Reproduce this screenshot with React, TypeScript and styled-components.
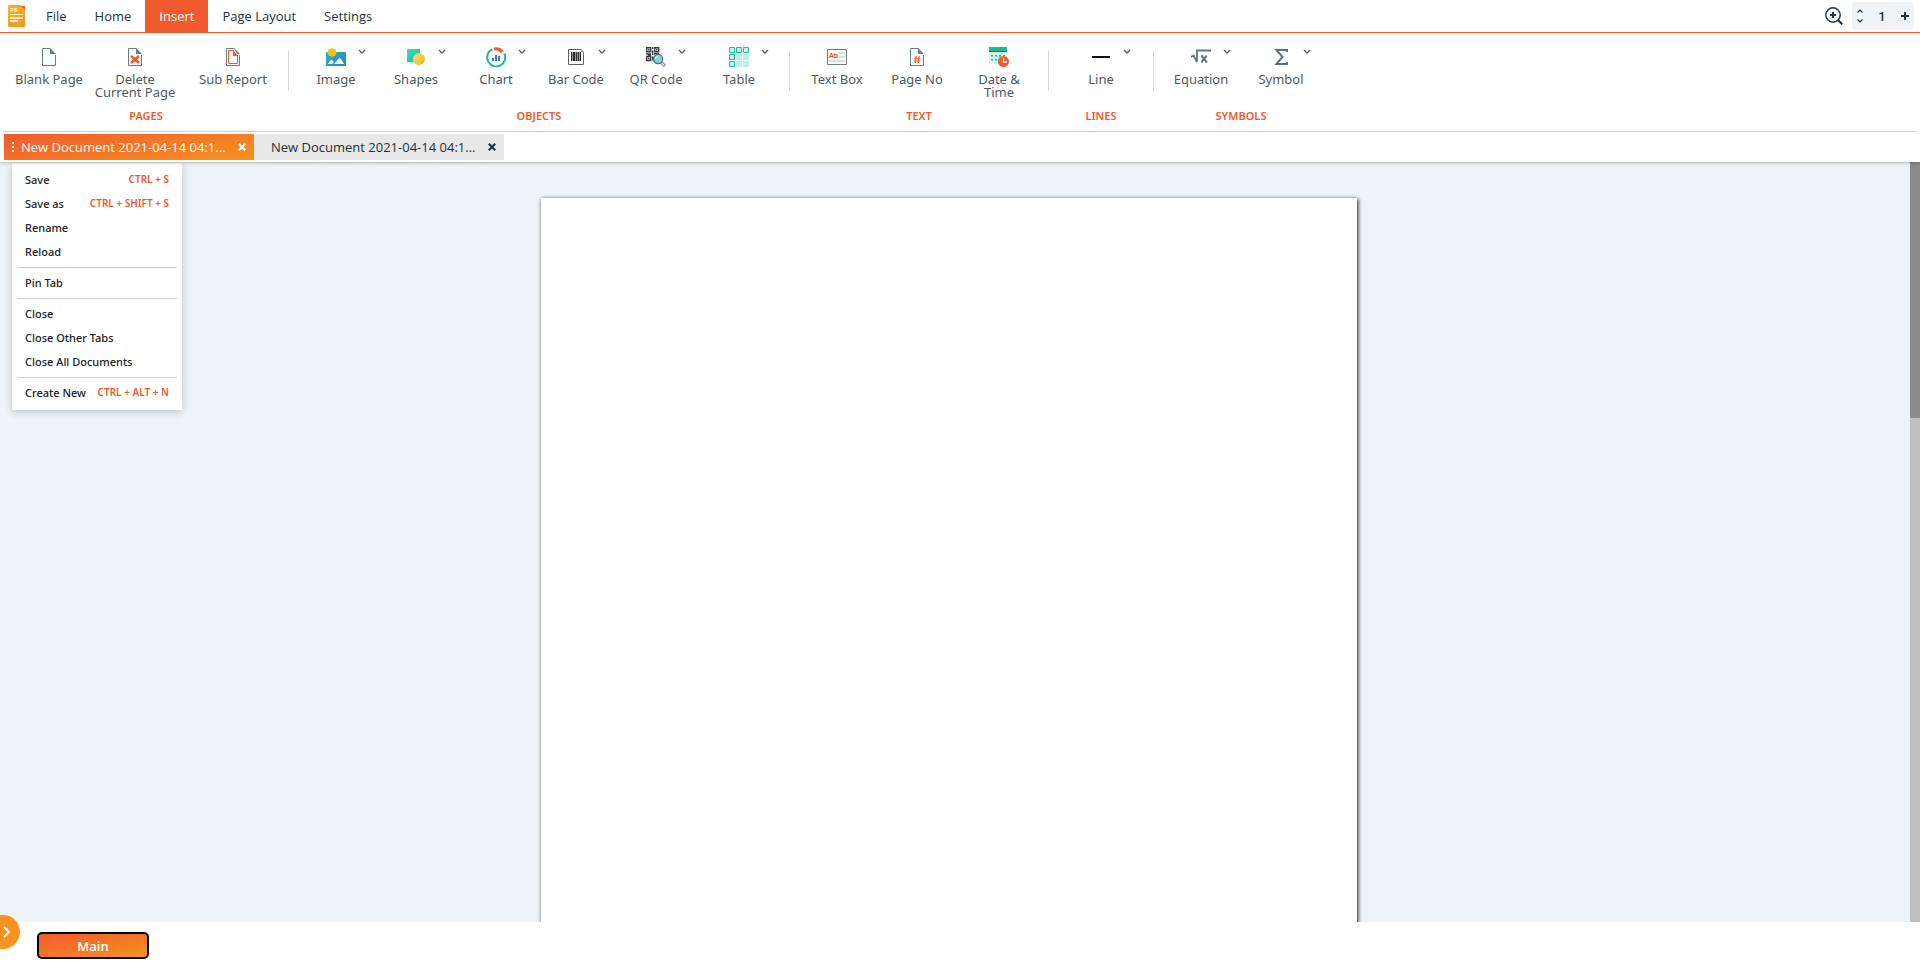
import React from "react";
import styled, { createGlobalStyle, css } from "styled-components";

const color = {
  accent: "#f15a2e",
  amber: "#f7931e",
  ink: "#22313a",
  label: "#4f5b60",
  canvas: "#edf3f6",
  rule: "#d9d9d9",
};
const accentGradient = "linear-gradient(170deg, #f15a2e 0%, #f7931e 100%)";

const GlobalStyle = createGlobalStyle`
  * { box-sizing: border-box; }
  body {
    margin: 0;
    background: #fff;
    color: ${color.ink};
    font-family: "Open Sans", "Noto Sans", sans-serif;
    font-size: 13px;
  }
  button, input { font: inherit; color: inherit; border: 0; padding: 0; background: none; }
  svg { display: block; }
`;

const Shell = styled.div`
  display: flex;
  flex-direction: column;
  height: 100vh;
  overflow: hidden;
`;

/* ---------- top menu ---------- */

const TopBar = styled.header`
  display: flex;
  align-items: center;
  height: 33px;
  padding: 0 6px 0 8px;
  border-bottom: 1px solid ${color.accent};
`;

const TopNav = styled.nav`
  display: flex;
  flex: 1;
  align-self: stretch;
  margin-left: 7px;
`;

const NavButton = styled.button<{ $active?: boolean }>`
  padding: 0 14px;
  line-height: 32px;
  ${(p) =>
    p.$active &&
    css`
      background: ${color.accent};
      color: #fff;
    `}
`;

const ZoomButton = styled.button`
  margin-right: 9px;
`;

const PageStepper = styled.div`
  display: flex;
  align-items: center;
  justify-content: space-between;
  width: 62px;
  height: 28px;
  padding: 0 5px;
  border-radius: 4px;
  background: ${color.canvas};
`;

const StepArrows = styled.div`
  display: grid;
  gap: 6px;
`;

const PageInput = styled.input`
  width: 24px;
  text-align: center;
  font-family: Roboto, sans-serif;
  font-weight: 500;
`;

/* ---------- ribbon ---------- */

const Ribbon = styled.section`
  display: flex;
  height: 99px;
  margin: 0 4px;
  border-bottom: 1px solid ${color.rule};
`;

const Group = styled.div`
  display: flex;
  flex-direction: column;
  justify-content: space-between;
  padding: 14px 0 8px;
`;

const Tools = styled.div<{ $flush?: boolean }>`
  display: flex;
  padding: ${(p) => (p.$flush ? "0 3px 0 5px" : "0 7px")};
`;

const GroupTitle = styled.h2`
  margin: 0;
  text-align: center;
  font-family: "Noto Sans", sans-serif;
  font-size: 11px;
  line-height: 14px;
  font-weight: 600;
  color: ${color.accent};
`;

const Divider = styled.div`
  width: 1px;
  height: 40px;
  margin-top: 18px;
  background: ${color.rule};
`;

const ToolButton = styled.button<{ $width: number }>`
  display: flex;
  flex-direction: column;
  align-items: center;
  width: ${(p) => p.$width}px;
  color: ${color.label};
  font-family: "Noto Sans", sans-serif;
  font-size: 13px;
  line-height: 13px;
`;

const IconRow = styled.span`
  display: grid;
  grid-template-columns: 20px 20px 20px;
  justify-content: center;
  height: 20px;
  margin-bottom: 6px;
  column-gap: 6px;

  & > :first-child { grid-column: 2; }
  & > :nth-child(2) { justify-self: center; }
`;

const ToolLabel = styled.span`
  white-space: pre-line;
`;

/* ---------- document tabs ---------- */

const TabBar = styled.div`
  position: relative;
  z-index: 2;
  display: flex;
  height: 30px;
  padding: 2px 4px;
  background: #fff;
  box-shadow: 0 1px 3px rgba(0, 0, 0, 0.25);
`;

const DocTab = styled.div<{ $active?: boolean }>`
  display: flex;
  align-items: center;
  width: 250px;
  padding: 0 8px 0 7px;
  background: ${(p) => (p.$active ? accentGradient : "#e8e8e8")};
  color: ${(p) => (p.$active ? "#fff" : color.ink)};
`;

const TabHandle = styled.button`
  flex: none;
  width: 10px;
  height: 16px;
`;

const TabTitle = styled.button<{ $active?: boolean }>`
  flex: 1;
  padding-left: ${(p) => (p.$active ? "0" : "10px")};
  text-align: left;
  white-space: nowrap;
  line-height: 26px;
`;

const CloseButton = styled.button`
  flex: none;
`;

/* ---------- workspace ---------- */

const Workspace = styled.main`
  position: relative;
  display: flex;
  flex: 1;
  min-height: 0;
  background: ${color.canvas};
`;

const Canvas = styled.div`
  display: flex;
  flex: 1;
  justify-content: center;
  padding: 36px 12px 0 0;
  overflow: hidden;
`;

const Sheet = styled.article`
  width: 816px;
  height: 1056px;
  background: #fff;
  box-shadow: 1px 1px 4px #111;
`;

const ScrollTrack = styled.div`
  width: 10px;
  background: #bfbfbf;
`;

const ScrollThumb = styled.div`
  height: 256px;
  background: #8a8a8a;
`;

const ContextMenu = styled.div`
  position: absolute;
  z-index: 1;
  top: 1px;
  left: 12px;
  width: 170px;
  padding: 5px;
  background: #fff;
  box-shadow: 0 2px 8px rgba(0, 0, 0, 0.2);
`;

const MenuItem = styled.button`
  display: flex;
  align-items: center;
  justify-content: space-between;
  width: 100%;
  height: 24px;
  padding: 0 8px 2px;
  color: #222;
  font-family: "Noto Sans", sans-serif;
  font-size: 11px;
  font-weight: 500;
  white-space: nowrap;
`;

const Shortcut = styled.span`
  color: ${color.accent};
  font-size: 10px;
  font-weight: 600;
`;

const MenuRule = styled.hr`
  height: 1px;
  margin: 3px 0;
  border: 0;
  background: #ccc;
`;

/* ---------- bottom bar ---------- */

const BottomBar = styled.footer`
  position: relative;
  display: flex;
  align-items: center;
  height: 47px;
  padding: 0 37px;
  background: #fff;
`;

const DrawerToggle = styled.button`
  position: absolute;
  top: -7px;
  left: -14px;
  width: 34px;
  height: 34px;
  padding-left: 15px;
  border-radius: 50%;
  background: ${color.amber};
`;

const SheetTab = styled.button`
  width: 112px;
  height: 27px;
  border: 2px solid #000;
  border-radius: 5px;
  background: ${accentGradient};
  color: #fff;
  font-size: 13px;
  font-weight: 600;
`;

/* ---------- drawings ---------- */

const Icon = ({ children }: { children: React.ReactNode }) => (
  <svg width="20" height="20" viewBox="0 0 20 20" fill="none" aria-hidden="true">
    {children}
  </svg>
);

const Paper = () => (
  <>
    <path d="M11.5 1.5h-8v17h13V8" stroke="#6d7d82" />
    <path d="M11 1l6 6h-6z" fill="#6d7d82" />
  </>
);

const BlankIcon = () => <Icon><Paper /></Icon>;

const DeleteIcon = () => (
  <Icon><Paper /><path d="M6 9l8 7M14 9l-8 7" stroke={color.accent} strokeWidth="2.6" /></Icon>
);

const ReportIcon = () => (
  <Icon>
    <path d="M11.5 1.5h-8v17h13V8" stroke="#6d7d82" />
    <path d="M10.500 3.500h-5v13h9V8" stroke={color.accent} />
    <path d="M10 3l5 6h-5z" fill={color.accent} />
    <path d="M11 1l6 6h-3z" fill="#6d7d82" />
  </Icon>
);

const ImageIcon = () => (
  <Icon>
    <defs>
      <linearGradient id="sky" x1="0" y1="0" x2="1" y2="1">
        <stop stopColor="#30b2c8" /><stop offset="1" stopColor="#2389bb" />
      </linearGradient>
    </defs>
    <path d="M0 5h20v14H0z" fill="url(#sky)" />
    <path d="M2 17c1-2 2-4 4-4l2 2-2 2zM8 17l5-6c2 0 3 3 5 6z" fill="#fff" />
    <path d="M6 1l1.500 1 2 .2.400 1.800 1 1.500-1 1.500-.4 1.800-2 .2L6 10l-1.500-1-2-.2L2.100 7 1 5.500 2.100 4l.4-1.800 2-.2z" fill="#ecc019" />
  </Icon>
);

const ShapesIcon = () => (
  <Icon>
    <defs>
      <linearGradient id="mint" x1="0" y1="0" x2="1" y2="1">
        <stop stopColor="#3fdcc0" /><stop offset="1" stopColor="#1fb79a" />
      </linearGradient>
      <linearGradient id="sun" x1="0" y1="0" x2="1" y2="1">
        <stop stopColor="#f8df7d" /><stop offset="1" stopColor="#e9b90e" />
      </linearGradient>
    </defs>
    <path d="M1 2h13v13H1z" fill="url(#mint)" />
    <circle cx="13" cy="12" r="6" fill="url(#sun)" />
  </Icon>
);

const ChartIcon = () => (
  <Icon>
    <path d="M6.500 2.200A9 9 0 1 0 18.300 6.500" stroke="#1fb99b" strokeWidth="2" />
    <path d="M8 .5c4-.9 7.500.7 9.500 3.700L14.500 6C13 4 11 3.200 8.500 3.800z" fill={color.accent} />
    <path d="M6 11h2v3H6zM9 8h2v6H9zM12 9h2v5h-2z" fill="#2a80b9" />
  </Icon>
);

const BarcodeIcon = () => (
  <Icon>
    <path d="M2.500 2.500h12l3 3v12h-15z" stroke="#5b6367" />
    <path d="M15 2l3 3h-3z" fill="#888" />
    <path d="M5 5h1v9H5zM7 5h2v9H7zM10 5h1v9h-1zM12 5h1v9h-1zM14 5h1v9h-1z" fill="#222" />
    <path d="M5 5h10v9H5z" fill="#333" opacity=".5" />
  </Icon>
);

const QrIcon = () => (
  <Icon>
    <g stroke="#3a3a3e" strokeWidth="1.400">
      <path d="M.7.700h4v4h-4zM8.700.700h4v4h-4zM.7 9.500h4v4h-4z" />
      <path d="M6.700 0v2M6.700 3.500V8M0 7h5M8 6.700h5M6.700 9.500v4M2 8.200h3" />
    </g>
    <path d="M2 2h1.500v1.500H2zM10 2h1.500v1.500H10zM2 10.800h1.500v1.500H2z" fill="#3a3a3e" />
    <circle cx="12" cy="12" r="5.200" fill="#fff" />
    <circle cx="12" cy="12" r="4.600" fill="#7fd6dc" stroke="#59666c" strokeWidth="1.200" />
    <path d="M9.500 12c0-1.800 1-2.500 2.500-2.500" stroke="#d5f7f7" />
    <path d="M15.300 15.300l3.700 3.700" stroke="#6f777b" strokeWidth="2.800" />
    <path d="M15.800 15.800l2.700 2.700" stroke="#f2f2f2" strokeWidth="1.200" />
  </Icon>
);

const TableIcon = () => (
  <Icon>
    <path d="M7 7h6v6H7zM14 7h6v6h-6zM7 14h6v6H7zM14 14h6v6h-6z" fill="#b8f1e4" />
    <path
      d="M.5.5h5v5h-5zM7.500.5h5v5h-5zM14.500.5h5v5h-5zM.5 7.500h5v5h-5zM.5 14.500h5v5h-5z"
      fill="#c8f5ea"
      stroke="#1fb99b"
    />
  </Icon>
);

const GlyphText = styled.text`
  font-family: "Open Sans", sans-serif;
  font-weight: 700;
`;

const TextBoxIcon = () => (
  <Icon>
    <path d="M.5 2.500h19v15H.5z" stroke="#6d7d82" />
    <path d="M12 5h6v2h-6zM12 9h6v2h-6zM2 13h16v2H2z" fill="#d9dcde" />
    <GlyphText x="2" y="11" fontSize="7" fill={color.accent}>Ab</GlyphText>
  </Icon>
);

const PageNoIcon = () => (
  <Icon>
    <Paper />
    <path
      d="M9 9l-.6 7M12 9l-.6 7M7 11.200h6.500M6.700 14h6.500"
      stroke={color.accent}
      strokeWidth="1.100"
    />
  </Icon>
);

const DateIcon = () => (
  <Icon>
    <path d="M0 0h18v17H0z" fill="#d2f5ec" />
    <path d="M0 0h18v4H0z" fill="#1fb99b" />
    <path d="M0 4h18v1H0z" fill="#455a60" />
    <path d="M2 8.750h14M2 12.750h9" stroke="#1fb99b" strokeWidth="1.500" strokeDasharray="2 2" />
    <circle cx="14.500" cy="14.500" r="5.500" fill={color.accent} />
    <path d="M14.500 11v4H18" stroke="#fff" strokeWidth="1.300" />
  </Icon>
);

const LineIcon = () => <Icon><path d="M1 9h18v2H1z" fill="#111" /></Icon>;

const EquationIcon = () => (
  <Icon>
    <path d="M0 10l2.500-1.500L6 15V3.500h14" stroke="#66767c" strokeWidth="1.800" />
    <path d="M10.500 9l5 6M15.500 9l-5 6" stroke="#56656b" strokeWidth="1.900" />
    <path d="M10 9h2.500M14.500 9H16M10 15h2M14 15h2.500" stroke="#56656b" />
  </Icon>
);

const SymbolIcon = () => (
  <Icon>
    <path d="M16 5V3H5.500l6 7-6 7H16v-2" stroke="#60707a" strokeWidth="2" />
  </Icon>
);

const Chevron = () => (
  <svg width="8" height="10" viewBox="0 0 8 10" fill="none" aria-hidden="true">
    <path d="M1 3l3 3 3-3" stroke={color.label} strokeWidth="1.300" />
  </svg>
);

const Cross = () => (
  <svg width="8" height="8" viewBox="0 0 8 8" aria-hidden="true">
    <path d="M.8.8l6.400 6.400M7.200.8L.8 7.200" stroke="currentColor" strokeWidth="2.200" />
  </svg>
);

const Logo = () => (
  <svg width="17" height="22" viewBox="0 0 17 22" role="img" aria-label="PB">
    <defs>
      <linearGradient id="logo" x1="0" y1="0" x2="1" y2="1">
        <stop stopColor="#f0b428" /><stop offset="1" stopColor="#f7931e" />
      </linearGradient>
    </defs>
    <path d="M1 0h12l4 4v17l-1 1H1l-1-1V1z" fill="url(#logo)" />
    <path d="M13 1h4v4z" fill={color.accent} />
    <path d="M2 9h13v1H2zM2 12h13v2H2zM2 15h8v2H2z" fill="#fff0c4" />
    <GlyphText x="2" y="7" fontSize="6" fill="#fff0c4">PB</GlyphText>
  </svg>
);

/* ---------- data ---------- */

type Tool = { label: string; icon: React.FC; width?: number; menu?: boolean };

const groups: { title: string; flush?: boolean; tools: Tool[] }[] = [
  {
    title: "PAGES",
    flush: true,
    tools: [
      { label: "Blank Page", icon: BlankIcon },
      { label: "Delete\nCurrent Page", icon: DeleteIcon, width: 92 },
      { label: "Sub Report", icon: ReportIcon, width: 104 },
    ],
  },
  {
    title: "OBJECTS",
    tools: [
      { label: "Image", icon: ImageIcon, menu: true },
      { label: "Shapes", icon: ShapesIcon, menu: true },
      { label: "Chart", icon: ChartIcon, menu: true },
      { label: "Bar Code", icon: BarcodeIcon, menu: true },
      { label: "QR Code", icon: QrIcon, menu: true },
      { label: "Table", icon: TableIcon, menu: true, width: 86 },
    ],
  },
  {
    title: "TEXT",
    tools: [
      { label: "Text Box", icon: TextBoxIcon },
      { label: "Page No", icon: PageNoIcon },
      { label: "Date &\nTime", icon: DateIcon, width: 84 },
    ],
  },
  { title: "LINES", tools: [{ label: "Line", icon: LineIcon, menu: true, width: 90 }] },
  {
    title: "SYMBOLS",
    tools: [
      { label: "Equation", icon: EquationIcon, menu: true },
      { label: "Symbol", icon: SymbolIcon, menu: true },
    ],
  },
];

const menuSections: [string, string?][][] = [
  [["Save", "CTRL + S"], ["Save as", "CTRL + SHIFT + S"], ["Rename"], ["Reload"]],
  [["Pin Tab"]],
  [["Close"], ["Close Other Tabs"], ["Close All Documents"]],
  [["Create New", "CTRL + ALT + N"]],
];

export default function App() {
  return (
    <>
      <GlobalStyle />
      <Shell>
        <TopBar>
          <Logo />
          <TopNav>
            {["File", "Home", "Insert", "Page Layout", "Settings"].map((name) => (
              <NavButton key={name} $active={name === "Insert"}>{name}</NavButton>
            ))}
          </TopNav>
          <ZoomButton aria-label="Zoom in">
            <svg width="18" height="18" viewBox="0 0 18 18" fill="none">
              <circle cx="8" cy="8" r="7.200" stroke={color.ink} strokeWidth="1.400" />
              <path d="M8 5v6M5 8h6" stroke={color.ink} strokeWidth="2" />
              <path d="M13 13l4.300 4.300" stroke={color.ink} strokeWidth="2.200" />
            </svg>
          </ZoomButton>
          <PageStepper>
            <StepArrows>
              <button aria-label="Previous page">
                <svg width="6" height="4" viewBox="0 0 6 4" fill="none">
                  <path d="M.5 3.500L3 1l2.500 2.500" stroke={color.ink} strokeWidth="1.200" />
                </svg>
              </button>
              <button aria-label="Next page">
                <svg width="6" height="4" viewBox="0 0 6 4" fill="none">
                  <path d="M.5.5L3 3 5.500.5" stroke={color.ink} strokeWidth="1.200" />
                </svg>
              </button>
            </StepArrows>
            <PageInput aria-label="Page number" defaultValue="1" />
            <button aria-label="Add page">
              <svg width="8" height="8" viewBox="0 0 8 8">
                <path d="M3 0h2v3h3v2H5v3H3V5H0V3h3z" fill={color.ink} />
              </svg>
            </button>
          </PageStepper>
        </TopBar>

        <Ribbon>
          {groups.map((group, index) => (
            <React.Fragment key={group.title}>
              {index > 0 && <Divider />}
              <Group>
                <Tools $flush={group.flush}>
                  {group.tools.map(({ label, icon: ToolIcon, width = 80, menu }) => (
                    <ToolButton key={label} $width={width}>
                      <IconRow>
                        <ToolIcon />
                        {menu && <Chevron />}
                      </IconRow>
                      <ToolLabel>{label}</ToolLabel>
                    </ToolButton>
                  ))}
                </Tools>
                <GroupTitle>{group.title}</GroupTitle>
              </Group>
            </React.Fragment>
          ))}
        </Ribbon>

        <TabBar>
          {[true, false].map((active) => (
            <DocTab key={String(active)} $active={active}>
              {active && (
                <TabHandle aria-label="Tab menu">
                  <svg width="4" height="12" viewBox="0 0 4 12" fill="#fff">
                    <path d="M1 1h2v2H1zM1 5h2v2H1zM1 9h2v2H1z" />
                  </svg>
                </TabHandle>
              )}
              <TabTitle $active={active}>New Document 2021-04-14 04:1...</TabTitle>
              <CloseButton aria-label="Close tab"><Cross /></CloseButton>
            </DocTab>
          ))}
        </TabBar>

        <Workspace>
          <ContextMenu>
            {menuSections.map((items, index) => (
              <React.Fragment key={index}>
                {index > 0 && <MenuRule />}
                {items.map(([name, keys]) => (
                  <MenuItem key={name}>
                    {name}
                    {keys && <Shortcut>{keys}</Shortcut>}
                  </MenuItem>
                ))}
              </React.Fragment>
            ))}
          </ContextMenu>
          <Canvas><Sheet /></Canvas>
          <ScrollTrack><ScrollThumb /></ScrollTrack>
        </Workspace>

        <BottomBar>
          <DrawerToggle aria-label="Open panel">
            <svg width="12" height="14" viewBox="0 0 12 14" fill="none">
              <path d="M3 2l5 5-5 5" stroke="#fff" strokeWidth="2" />
            </svg>
          </DrawerToggle>
          <SheetTab>Main</SheetTab>
        </BottomBar>
      </Shell>
    </>
  );
}
